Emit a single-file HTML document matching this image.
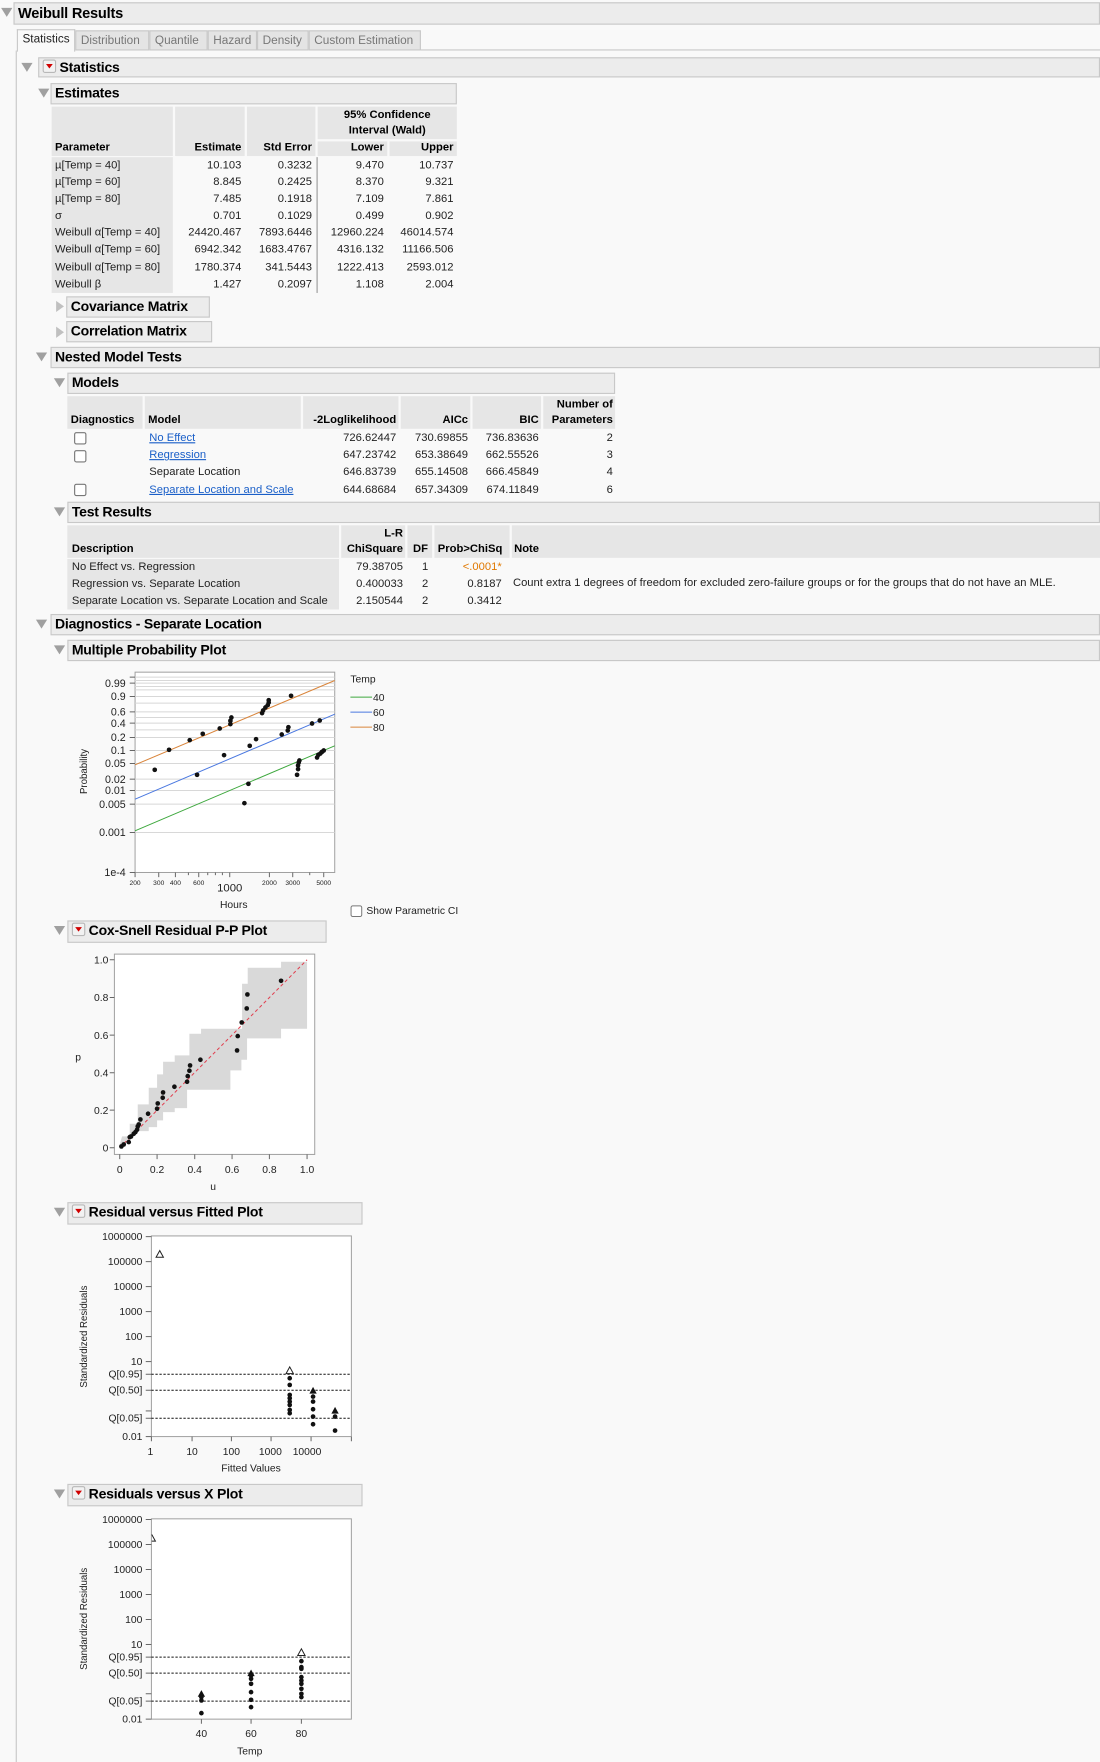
<!DOCTYPE html>
<html><head><meta charset="utf-8">
<style>
body{margin:0;width:1100px;height:1762px;overflow:hidden;background:#fff;font-family:"Liberation Sans",sans-serif;}
#w{position:absolute;left:0;top:0;width:980px;height:1570px;transform:scale(1.12245);transform-origin:0 0;background:#f9f9f9;}
.a{position:absolute;}
.hd{position:absolute;background:#ececec;border:1px solid #c8c8c8;box-sizing:border-box;font-weight:bold;font-size:12.5px;color:#000;line-height:17px;padding-left:3px;white-space:nowrap;letter-spacing:-0.2px}
.tri{position:absolute;width:0;height:0;border-left:5px solid transparent;border-right:5px solid transparent;border-top:8px solid #a0a0a0;}
.trr{position:absolute;width:0;height:0;border-top:5px solid transparent;border-bottom:5px solid transparent;border-left:7px solid #c0c0c0;}
.dd{display:inline-block;width:10px;height:10px;border:1px solid #b8b8b8;border-radius:2px;background:#f2f2f2;vertical-align:-1px;margin-right:3px;position:relative}
.dd:after{content:"";position:absolute;left:2px;top:3px;border-left:3px solid transparent;border-right:3px solid transparent;border-top:4px solid #d00000}
.g{position:absolute;background:#e6e6e6}
.t{position:absolute;font-size:10px;color:#222;white-space:nowrap;line-height:13px}
.b{font-weight:bold;color:#000}
.r{text-align:right}
.tab{position:absolute;top:27px;height:18px;background:#e4e4e4;border:1px solid #c8c8c8;box-sizing:border-box;font-size:10.5px;color:#777;line-height:16px;padding-left:4px}
.lk{color:#1a5fc8;text-decoration:underline}
.cb{position:absolute;width:9px;height:9px;border:1px solid #777;border-radius:2px;background:#fff}
svg text{font-family:"Liberation Sans",sans-serif}
</style></head><body><div id="w">

<div class="tri" style="left:1px;top:7px"></div>
<div class="hd" style="left:12px;top:2px;width:968px;height:20px;font-size:13px">Weibull Results</div>
<div class="a" style="left:14px;top:45px;width:1px;height:1525px;background:#c8c8c8"></div>
<div class="a" style="left:375px;top:44px;width:605px;height:1px;background:#c8c8c8"></div>
<div class="tab" style="left:15px;width:52px;background:#f9f9f9;color:#222;border-bottom:none;top:26px;height:20px">Statistics</div>
<div class="tab" style="left:67px;width:66px">Distribution</div>
<div class="tab" style="left:133px;width:52px">Quantile</div>
<div class="tab" style="left:185px;width:44px">Hazard</div>
<div class="tab" style="left:229px;width:46px">Density</div>
<div class="tab" style="left:275px;width:100px">Custom Estimation</div>

<div class="tri" style="left:19px;top:56px"></div>
<div class="hd" style="left:34px;top:51px;width:946px;height:18px"><span class="dd"></span>Statistics</div>
<div class="tri" style="left:34px;top:79px"></div>
<div class="hd" style="left:45px;top:74px;width:362px;height:19px">Estimates</div>

<div class="g" style="left:46px;top:95px;width:108px;height:44px"></div>
<div class="g" style="left:156px;top:95px;width:62px;height:44px"></div>
<div class="g" style="left:220px;top:95px;width:61px;height:44px"></div>
<div class="g" style="left:283px;top:95px;width:124px;height:29px"></div>
<div class="g" style="left:283px;top:126px;width:62px;height:13px"></div>
<div class="g" style="left:347px;top:126px;width:60px;height:13px"></div>
<div class="g" style="left:46px;top:140px;width:108px;height:121px"></div>
<div class="a" style="left:282px;top:140px;width:1px;height:121px;background:#999"></div>
<div class="t b" style="left:283px;top:96px;width:124px;text-align:center">95% Confidence</div>
<div class="t b" style="left:283px;top:110px;width:124px;text-align:center">Interval (Wald)</div>
<div class="t b" style="left:49px;top:125px">Parameter</div>
<div class="t b r" style="left:156px;top:125px;width:59px">Estimate</div>
<div class="t b r" style="left:220px;top:125px;width:58px">Std Error</div>
<div class="t b r" style="left:283px;top:125px;width:59px">Lower</div>
<div class="t b r" style="left:347px;top:125px;width:57px">Upper</div>
<div class="t" style="left:49px;top:140px;line-height:15.1px">µ[Temp = 40]<br>µ[Temp = 60]<br>µ[Temp = 80]<br>σ<br>Weibull α[Temp = 40]<br>Weibull α[Temp = 60]<br>Weibull α[Temp = 80]<br>Weibull β</div>
<div class="t r" style="left:156px;top:140px;width:59px;line-height:15.1px">10.103<br>8.845<br>7.485<br>0.701<br>24420.467<br>6942.342<br>1780.374<br>1.427</div>
<div class="t r" style="left:220px;top:140px;width:58px;line-height:15.1px">0.3232<br>0.2425<br>0.1918<br>0.1029<br>7893.6446<br>1683.4767<br>341.5443<br>0.2097</div>
<div class="t r" style="left:283px;top:140px;width:59px;line-height:15.1px">9.470<br>8.370<br>7.109<br>0.499<br>12960.224<br>4316.132<br>1222.413<br>1.108</div>
<div class="t r" style="left:347px;top:140px;width:57px;line-height:15.1px">10.737<br>9.321<br>7.861<br>0.902<br>46014.574<br>11166.506<br>2593.012<br>2.004</div>

<div class="trr" style="left:50px;top:268px"></div>
<div class="hd" style="left:59px;top:264px;width:128px;height:19px">Covariance Matrix</div>
<div class="trr" style="left:50px;top:291px"></div>
<div class="hd" style="left:59px;top:286px;width:130px;height:19px">Correlation Matrix</div>

<div class="tri" style="left:32px;top:314px"></div>
<div class="hd" style="left:45px;top:309px;width:935px;height:19px">Nested Model Tests</div>
<div class="tri" style="left:48px;top:337px"></div>
<div class="hd" style="left:60px;top:332px;width:488px;height:19px">Models</div>

<div class="g" style="left:60px;top:353px;width:67px;height:29px"></div>
<div class="g" style="left:129px;top:353px;width:139px;height:29px"></div>
<div class="g" style="left:270px;top:353px;width:85px;height:29px"></div>
<div class="g" style="left:357px;top:353px;width:62px;height:29px"></div>
<div class="g" style="left:421px;top:353px;width:61px;height:29px"></div>
<div class="g" style="left:484px;top:353px;width:64px;height:29px"></div>
<div class="t b r" style="left:484px;top:354px;width:62px">Number of</div>
<div class="t b" style="left:63px;top:368px">Diagnostics</div>
<div class="t b" style="left:132px;top:368px">Model</div>
<div class="t b r" style="left:270px;top:368px;width:83px">-2Loglikelihood</div>
<div class="t b r" style="left:357px;top:368px;width:60px">AICc</div>
<div class="t b r" style="left:421px;top:368px;width:59px">BIC</div>
<div class="t b r" style="left:484px;top:368px;width:62px">Parameters</div>
<div class="cb" style="left:66px;top:385px"></div>
<div class="cb" style="left:66px;top:401px"></div>
<div class="cb" style="left:66px;top:431px"></div>
<div class="t" style="left:133px;top:383px;line-height:15.2px"><span class="lk">No Effect</span><br><span class="lk">Regression</span><br>Separate Location<br><span class="lk">Separate Location and Scale</span></div>
<div class="t r" style="left:270px;top:383px;width:83px;line-height:15.2px">726.62447<br>647.23742<br>646.83739<br>644.68684</div>
<div class="t r" style="left:357px;top:383px;width:60px;line-height:15.2px">730.69855<br>653.38649<br>655.14508<br>657.34309</div>
<div class="t r" style="left:421px;top:383px;width:59px;line-height:15.2px">736.83636<br>662.55526<br>666.45849<br>674.11849</div>
<div class="t r" style="left:484px;top:383px;width:62px;line-height:15.2px">2<br>3<br>4<br>6</div>

<div class="tri" style="left:48px;top:452px"></div>
<div class="hd" style="left:60px;top:447px;width:920px;height:19px">Test Results</div>
<div class="g" style="left:60px;top:468px;width:242px;height:29px"></div>
<div class="g" style="left:304px;top:468px;width:57px;height:29px"></div>
<div class="g" style="left:363px;top:468px;width:22px;height:29px"></div>
<div class="g" style="left:387px;top:468px;width:67px;height:29px"></div>
<div class="g" style="left:456px;top:468px;width:524px;height:29px"></div>
<div class="g" style="left:60px;top:498px;width:242px;height:45px"></div>
<div class="t b r" style="left:304px;top:469px;width:55px">L-R</div>
<div class="t b" style="left:64px;top:483px">Description</div>
<div class="t b r" style="left:304px;top:483px;width:55px">ChiSquare</div>
<div class="t b" style="left:368px;top:483px">DF</div>
<div class="t b" style="left:390px;top:483px">Prob&gt;ChiSq</div>
<div class="t b" style="left:458px;top:483px">Note</div>
<div class="t" style="left:64px;top:498px;line-height:15.2px">No Effect vs. Regression<br>Regression vs. Separate Location<br>Separate Location vs. Separate Location and Scale</div>
<div class="t r" style="left:304px;top:498px;width:55px;line-height:15.2px">79.38705<br>0.400033<br>2.150544</div>
<div class="t" style="left:376px;top:498px;line-height:15.2px">1<br>2<br>2</div>
<div class="t r" style="left:387px;top:498px;width:60px;line-height:15.2px"><span style="color:#e07800">&lt;.0001*</span><br>0.8187<br>0.3412</div>
<div class="t" style="left:457px;top:513px">Count extra 1 degrees of freedom for excluded zero-failure groups or for the groups that do not have an MLE.</div>

<div class="tri" style="left:32px;top:552px"></div>
<div class="hd" style="left:45px;top:547px;width:935px;height:19px">Diagnostics - Separate Location</div>
<div class="tri" style="left:48px;top:575px"></div>
<div class="hd" style="left:60px;top:570px;width:920px;height:19px">Multiple Probability Plot</div>

<svg class="a" style="left:35.64px;top:570.2px" width="400.9" height="249.5" viewBox="0 0 1350 840">
<rect x="284" y="97" width="599" height="601" fill="#fff" stroke="#a0a0a0" stroke-width="3"/>
<g stroke="#d8d8d8" stroke-width="3">
<line x1="284" x2="883" y1="112" y2="112"/><line x1="284" x2="883" y1="122" y2="122"/><line x1="284" x2="883" y1="130" y2="130"/><line x1="284" x2="883" y1="140" y2="140"/><line x1="284" x2="883" y1="150" y2="150"/><line x1="284" x2="883" y1="170" y2="170"/><line x1="284" x2="883" y1="190" y2="190"/><line x1="284" x2="883" y1="216" y2="216"/><line x1="284" x2="883" y1="233" y2="233"/><line x1="284" x2="883" y1="250" y2="250"/><line x1="284" x2="883" y1="270" y2="270"/><line x1="284" x2="883" y1="293" y2="293"/><line x1="284" x2="883" y1="332" y2="332"/><line x1="284" x2="883" y1="371" y2="371"/><line x1="284" x2="883" y1="418" y2="418"/><line x1="284" x2="883" y1="452" y2="452"/><line x1="284" x2="883" y1="493" y2="493"/><line x1="284" x2="883" y1="578" y2="578"/>
</g>
<g stroke="#666" stroke-width="3">
<line x1="268" x2="284" y1="112" y2="112"/><line x1="268" x2="284" y1="130" y2="130"/><line x1="268" x2="284" y1="170" y2="170"/><line x1="268" x2="284" y1="216" y2="216"/><line x1="268" x2="284" y1="250" y2="250"/><line x1="268" x2="284" y1="293" y2="293"/><line x1="268" x2="284" y1="332" y2="332"/><line x1="268" x2="284" y1="371" y2="371"/><line x1="268" x2="284" y1="418" y2="418"/><line x1="268" x2="284" y1="452" y2="452"/><line x1="268" x2="284" y1="493" y2="493"/><line x1="268" x2="284" y1="578" y2="578"/><line x1="268" x2="284" y1="698" y2="698"/>
<line x1="284" x2="284" y1="698" y2="712"/><line x1="355" x2="355" y1="698" y2="712"/><line x1="405" x2="405" y1="698" y2="712"/><line x1="444" x2="444" y1="698" y2="706"/><line x1="475" x2="475" y1="698" y2="712"/><line x1="502" x2="502" y1="698" y2="706"/><line x1="525" x2="525" y1="698" y2="706"/><line x1="546" x2="546" y1="698" y2="706"/><line x1="568" x2="568" y1="698" y2="712"/><line x1="687" x2="687" y1="698" y2="712"/><line x1="757" x2="757" y1="698" y2="712"/><line x1="808" x2="808" y1="698" y2="706"/><line x1="850" x2="850" y1="698" y2="712"/>
</g>
<g font-size="32" fill="#222" text-anchor="end">
<text x="256" y="141">0.99</text><text x="256" y="181">0.9</text><text x="256" y="227">0.6</text><text x="256" y="261">0.4</text><text x="256" y="304">0.2</text><text x="256" y="343">0.1</text><text x="256" y="382">0.05</text><text x="256" y="429">0.02</text><text x="256" y="463">0.01</text><text x="256" y="504">0.005</text><text x="256" y="589">0.001</text><text x="256" y="709">1e-4</text>
</g>
<g font-size="20" fill="#222" text-anchor="middle">
<text x="284" y="735">200</text><text x="355" y="735">300</text><text x="405" y="735">400</text><text x="475" y="735">600</text><text x="687" y="735">2000</text><text x="757" y="735">3000</text><text x="850" y="735">5000</text>
</g>
<text x="568" y="755" font-size="34" fill="#222" text-anchor="middle">1000</text>
<text x="580" y="805" font-size="31" fill="#222" text-anchor="middle">Hours</text>
<text transform="translate(140,395) rotate(-90)" font-size="29" fill="#222" text-anchor="middle">Probability</text>
<line x1="284" y1="375" x2="883" y2="122" stroke="#d9843a" stroke-width="3"/>
<line x1="284" y1="478" x2="883" y2="223" stroke="#4a78e0" stroke-width="3"/>
<line x1="284" y1="573" x2="883" y2="318" stroke="#3ea83e" stroke-width="3"/>
<g fill="#111">
<circle cx="343" cy="390" r="7"/><circle cx="386" cy="330" r="7"/><circle cx="448" cy="301" r="7"/><circle cx="470" cy="405" r="7"/><circle cx="487" cy="282" r="7"/><circle cx="538" cy="266" r="7"/><circle cx="551" cy="346" r="7"/><circle cx="570" cy="253" r="7"/><circle cx="570" cy="243" r="7"/><circle cx="573" cy="233" r="7"/><circle cx="612" cy="490" r="7"/><circle cx="624" cy="432" r="7"/><circle cx="628" cy="318" r="7"/><circle cx="647" cy="298" r="7"/><circle cx="665" cy="220" r="7"/><circle cx="668" cy="212" r="7"/><circle cx="675" cy="203" r="7"/><circle cx="682" cy="196" r="7"/><circle cx="685" cy="188" r="7"/><circle cx="685" cy="181" r="7"/><circle cx="724" cy="284" r="7"/><circle cx="742" cy="272" r="7"/><circle cx="744" cy="262" r="7"/><circle cx="752" cy="168" r="7"/><circle cx="770" cy="405" r="7"/><circle cx="773" cy="388" r="7"/><circle cx="773" cy="377" r="7"/><circle cx="775" cy="368" r="7"/><circle cx="777" cy="362" r="7"/><circle cx="815" cy="251" r="7"/><circle cx="838" cy="242" r="7"/><circle cx="830" cy="353" r="7"/><circle cx="834" cy="345" r="7"/><circle cx="840" cy="341" r="7"/><circle cx="845" cy="336" r="7"/><circle cx="850" cy="332" r="7"/>
</g>
<text x="930" y="128" font-size="31" fill="#222">Temp</text>
<line x1="930" x2="995" y1="172" y2="172" stroke="#3ea83e" stroke-width="3"/>
<line x1="930" x2="995" y1="217" y2="217" stroke="#4a78e0" stroke-width="3"/>
<line x1="930" x2="995" y1="262" y2="262" stroke="#d9843a" stroke-width="3"/>
<g font-size="31" fill="#222"><text x="998" y="183">40</text><text x="998" y="228">60</text><text x="998" y="273">80</text></g>
<rect x="932" y="798" width="32" height="32" rx="5" fill="#fff" stroke="#777" stroke-width="3"/>
<text x="978" y="823" font-size="31" fill="#222">Show Parametric CI</text>
</svg>

<div class="tri" style="left:48px;top:825px"></div>
<div class="hd" style="left:60px;top:820px;width:231px;height:20px"><span class="dd"></span>Cox-Snell Residual P-P Plot</div>
<svg class="a" style="left:35.64px;top:819.7px" width="302.9" height="249.5" viewBox="0 0 1020 840">
<rect x="222" y="101" width="601" height="601" fill="#fff" stroke="#a0a0a0" stroke-width="3"/>
<polygon fill="#d9d9d9" points="238,672 245,648 268,648 268,610 292,610 292,552 325,552 325,502 350,502 350,462 368,462 368,424 403,424 403,405 447,405 447,340 482,340 482,325 605,325 605,190 622,190 622,142 722,142 722,124 800,124 800,325 722,325 722,354 620,354 620,418 603,418 603,450 570,450 570,508 482,508 482,508 440,508 440,563 403,563 403,575 368,575 368,600 350,600 350,620 325,620 325,632 292,632 268,660 250,672 238,684"/>
<line x1="238" y1="682" x2="800" y2="118" stroke="#e04050" stroke-width="3" stroke-dasharray="10,8"/>
<g stroke="#666" stroke-width="3">
<line x1="208" x2="222" y1="118" y2="118"/><line x1="208" x2="222" y1="231" y2="231"/><line x1="208" x2="222" y1="344" y2="344"/><line x1="208" x2="222" y1="457" y2="457"/><line x1="208" x2="222" y1="569" y2="569"/><line x1="208" x2="222" y1="682" y2="682"/>
<line x1="238" x2="238" y1="702" y2="716"/><line x1="350" x2="350" y1="702" y2="716"/><line x1="463" x2="463" y1="702" y2="716"/><line x1="575" x2="575" y1="702" y2="716"/><line x1="687" x2="687" y1="702" y2="716"/><line x1="800" x2="800" y1="702" y2="716"/>
</g>
<g font-size="31" fill="#222" text-anchor="end"><text x="204" y="129">1.0</text><text x="204" y="242">0.8</text><text x="204" y="355">0.6</text><text x="204" y="468">0.4</text><text x="204" y="580">0.2</text><text x="204" y="693">0</text></g>
<g font-size="31" fill="#222" text-anchor="middle"><text x="238" y="758">0</text><text x="350" y="758">0.2</text><text x="463" y="758">0.4</text><text x="575" y="758">0.6</text><text x="687" y="758">0.8</text><text x="800" y="758">1.0</text>
<text x="518" y="808">u</text><text x="113" y="420">p</text></g>
<g fill="#111">
<circle cx="243" cy="678" r="7"/><circle cx="250" cy="672" r="7"/><circle cx="265" cy="665" r="7"/><circle cx="268" cy="650" r="7"/><circle cx="272" cy="648" r="7"/><circle cx="280" cy="640" r="7"/><circle cx="285" cy="635" r="7"/><circle cx="290" cy="628" r="7"/><circle cx="292" cy="618" r="7"/><circle cx="295" cy="612" r="7"/><circle cx="300" cy="597" r="7"/><circle cx="323" cy="580" r="7"/><circle cx="350" cy="565" r="7"/><circle cx="352" cy="549" r="7"/><circle cx="367" cy="532" r="7"/><circle cx="368" cy="516" r="7"/><circle cx="402" cy="499" r="7"/><circle cx="440" cy="484" r="7"/><circle cx="442" cy="467" r="7"/><circle cx="447" cy="451" r="7"/><circle cx="449" cy="435" r="7"/><circle cx="480" cy="418" r="7"/><circle cx="590" cy="390" r="7"/><circle cx="592" cy="347" r="7"/><circle cx="604" cy="306" r="7"/><circle cx="619" cy="264" r="7"/><circle cx="621" cy="222" r="7"/><circle cx="722" cy="181" r="7"/>
</g>
</svg>

<div class="tri" style="left:48px;top:1076px"></div>
<div class="hd" style="left:60px;top:1071px;width:263px;height:20px"><span class="dd"></span>Residual versus Fitted Plot</div>
<svg class="a" style="left:35.64px;top:1069.1px" width="302.9" height="249.5" viewBox="0 0 1020 840">
<rect x="333" y="108" width="600" height="602" fill="#fff" stroke="#a0a0a0" stroke-width="3"/>
<g stroke="#111" stroke-width="3" stroke-dasharray="7,5"><line x1="333" x2="933" y1="523" y2="523"/><line x1="333" x2="933" y1="571" y2="571"/><line x1="333" x2="933" y1="655" y2="655"/></g>
<g stroke="#666" stroke-width="3">
<line x1="316" x2="333" y1="110" y2="110"/><line x1="316" x2="333" y1="185" y2="185"/><line x1="316" x2="333" y1="260" y2="260"/><line x1="316" x2="333" y1="335" y2="335"/><line x1="316" x2="333" y1="410" y2="410"/><line x1="316" x2="333" y1="485" y2="485"/><line x1="316" x2="333" y1="523" y2="523"/><line x1="316" x2="333" y1="571" y2="571"/><line x1="316" x2="333" y1="633" y2="633"/><line x1="316" x2="333" y1="655" y2="655"/><line x1="316" x2="333" y1="710" y2="710"/>
<line x1="333" x2="333" y1="710" y2="724"/><line x1="455" x2="455" y1="710" y2="724"/><line x1="573" x2="573" y1="710" y2="724"/><line x1="692" x2="692" y1="710" y2="724"/><line x1="812" x2="812" y1="710" y2="724"/><line x1="933" x2="933" y1="710" y2="724"/>
</g>
<g font-size="31" fill="#222" text-anchor="end"><text x="306" y="120">1000000</text><text x="306" y="195">100000</text><text x="306" y="270">10000</text><text x="306" y="345">1000</text><text x="306" y="420">100</text><text x="306" y="495">10</text><text x="306" y="533">Q[0.95]</text><text x="306" y="581">Q[0.50]</text><text x="306" y="665">Q[0.05]</text><text x="306" y="720">0.01</text></g>
<g font-size="31" fill="#222" text-anchor="middle"><text x="330" y="765">1</text><text x="455" y="765">10</text><text x="573" y="765">100</text><text x="690" y="765">1000</text><text x="800" y="765">10000</text><text x="632" y="815">Fitted Values</text></g>
<text transform="translate(140,410) rotate(-90)" font-size="29" fill="#222" text-anchor="middle">Standardized Residuals</text>
<g fill="none" stroke="#222" stroke-width="3"><polygon points="358,152 347,172 369,172"/><polygon points="748,501 737,521 759,521"/></g>
<g fill="#111">
<polygon points="818,561 807,581 829,581"/><polygon points="884,621 873,641 895,641"/>
<circle cx="748" cy="535" r="7"/><circle cx="748" cy="555" r="7"/><circle cx="748" cy="585" r="7"/><circle cx="748" cy="595" r="7"/><circle cx="748" cy="605" r="7"/><circle cx="748" cy="615" r="7"/><circle cx="748" cy="630" r="7"/><circle cx="748" cy="640" r="7"/>
<circle cx="818" cy="590" r="7"/><circle cx="818" cy="605" r="7"/><circle cx="818" cy="628" r="7"/><circle cx="818" cy="650" r="7"/><circle cx="818" cy="673" r="7"/>
<circle cx="884" cy="650" r="7"/><circle cx="884" cy="692" r="7"/>
</g>
</svg>

<div class="tri" style="left:48px;top:1327px"></div>
<div class="hd" style="left:60px;top:1322px;width:263px;height:20px"><span class="dd"></span>Residuals versus X Plot</div>
<svg class="a" style="left:35.64px;top:1318.6px" width="302.9" height="251.2" viewBox="0 0 1020 846">
<rect x="333" y="115" width="600" height="601" fill="#fff" stroke="#a0a0a0" stroke-width="3"/>
<g stroke="#111" stroke-width="3" stroke-dasharray="7,5"><line x1="333" x2="933" y1="530" y2="530"/><line x1="333" x2="933" y1="578" y2="578"/><line x1="333" x2="933" y1="662" y2="662"/></g>
<g stroke="#666" stroke-width="3">
<line x1="316" x2="333" y1="117" y2="117"/><line x1="316" x2="333" y1="192" y2="192"/><line x1="316" x2="333" y1="267" y2="267"/><line x1="316" x2="333" y1="342" y2="342"/><line x1="316" x2="333" y1="417" y2="417"/><line x1="316" x2="333" y1="492" y2="492"/><line x1="316" x2="333" y1="530" y2="530"/><line x1="316" x2="333" y1="578" y2="578"/><line x1="316" x2="333" y1="640" y2="640"/><line x1="316" x2="333" y1="662" y2="662"/><line x1="316" x2="333" y1="716" y2="716"/>
<line x1="483" x2="483" y1="716" y2="730"/><line x1="632" x2="632" y1="716" y2="730"/><line x1="783" x2="783" y1="716" y2="730"/>
</g>
<g font-size="31" fill="#222" text-anchor="end"><text x="306" y="127">1000000</text><text x="306" y="202">100000</text><text x="306" y="277">10000</text><text x="306" y="352">1000</text><text x="306" y="427">100</text><text x="306" y="502">10</text><text x="306" y="540">Q[0.95]</text><text x="306" y="588">Q[0.50]</text><text x="306" y="672">Q[0.05]</text><text x="306" y="726">0.01</text></g>
<g font-size="31" fill="#222" text-anchor="middle"><text x="483" y="770">40</text><text x="632" y="770">60</text><text x="783" y="770">80</text><text x="628" y="822">Temp</text></g>
<text transform="translate(140,415) rotate(-90)" font-size="29" fill="#222" text-anchor="middle">Standardized Residuals</text>
<g fill="none" stroke="#222" stroke-width="3"><polyline points="334,162 345,182 334,182"/><polygon points="783,505 772,525 794,525"/></g>
<g fill="#111">
<polygon points="483,629 472,649 494,649"/><polygon points="632,567 621,587 643,587"/>
<circle cx="483" cy="650" r="7"/><circle cx="483" cy="660" r="7"/><circle cx="483" cy="698" r="7"/>
<circle cx="632" cy="585" r="7"/><circle cx="632" cy="595" r="7"/><circle cx="632" cy="610" r="7"/><circle cx="632" cy="635" r="7"/><circle cx="632" cy="658" r="7"/><circle cx="632" cy="680" r="7"/>
<circle cx="783" cy="542" r="7"/><circle cx="783" cy="560" r="7"/><circle cx="783" cy="565" r="7"/><circle cx="783" cy="590" r="7"/><circle cx="783" cy="600" r="7"/><circle cx="783" cy="610" r="7"/><circle cx="783" cy="625" r="7"/><circle cx="783" cy="640" r="7"/><circle cx="783" cy="650" r="7"/>
</g>
</svg>

</div></body></html>
